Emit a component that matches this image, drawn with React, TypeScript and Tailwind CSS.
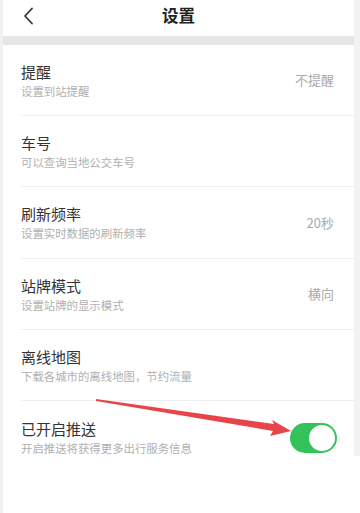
import React from "react";

const rows: { title: string; sub: string; value?: string; h: string }[] = [
  { title: "提醒", sub: "设置到站提醒", value: "不提醒", h: "h-[71px]" },
  { title: "车号", sub: "可以查询当地公交车号", h: "h-[71px]" },
  { title: "刷新频率", sub: "设置实时数据的刷新频率", value: "20秒", h: "h-[72px]" },
  { title: "站牌模式", sub: "设置站牌的显示模式", value: "横向", h: "h-[71px]" },
  { title: "离线地图", sub: "下载各城市的离线地图，节约流量", h: "h-[71px]" },
];

export default function App() {
  return (
    <div
      className="relative w-[360px] h-[513px] bg-white flex overflow-hidden"
      style={{ fontFamily: '"Noto Sans CJK SC", "Noto Sans", sans-serif' }}
    >
      <div className="w-[3px] h-full bg-[#f1f1f1] shrink-0" />
      <div className="w-[351px] flex flex-col shrink-0">
        <div className="relative h-[36px] flex items-center justify-center">
          <svg className="absolute left-[19px] top-[7px]" width="14" height="18" viewBox="0 0 14 18">
            <path d="M10 1.5 L3 9 L10 16.5" fill="none" stroke="#333" strokeWidth="1.8" strokeLinecap="round" strokeLinejoin="round" />
          </svg>
          <span className="text-[16.5px] font-bold text-[#222] leading-none -mt-[6px]">设置</span>
        </div>
        <div className="h-[9px] bg-[#e6e6e6]" />
        {rows.map((r) => (
          <div key={r.title} className={`${r.h} pl-[18px]`}>
            <div className="h-full flex items-center border-b border-[#eeeeee] pr-[20px]">
              <div className="flex-1 flex flex-col">
                <span className="text-[15px] leading-[18px] text-[#333]">{r.title}</span>
                <span className="text-[11.4px] leading-[14px] text-[#b0b0b0] mt-[3px]">{r.sub}</span>
              </div>
              {r.value && <span className="text-[13px] text-[#aaaaaa]">{r.value}</span>}
            </div>
          </div>
        ))}
        <div className="h-[55px] pl-[18px] flex items-start pr-[17px]">
          <div className="flex-1 flex flex-col pt-[19px]">
            <span className="text-[15px] leading-[18px] text-[#333]">已开启推送</span>
            <span className="text-[11.4px] leading-[14px] text-[#b0b0b0] mt-[3px]">开启推送将获得更多出行服务信息</span>
          </div>
          <div className="w-[47px] h-[30px] rounded-full bg-[#34c35a] relative mt-[22px]">
            <div className="absolute right-[2px] top-[2px] w-[26px] h-[26px] rounded-full bg-white" />
          </div>
        </div>
      </div>
      <div className="w-[6px] h-[456px] bg-[#f2f2f2] shrink-0" />
      <svg className="absolute left-0 top-0 pointer-events-none" width="360" height="513" viewBox="0 0 360 513">
        <polygon points="96,399 274,424 272,420 291,431 270,436 273,431 96,401" fill="#e8454a" />
      </svg>
    </div>
  );
}
